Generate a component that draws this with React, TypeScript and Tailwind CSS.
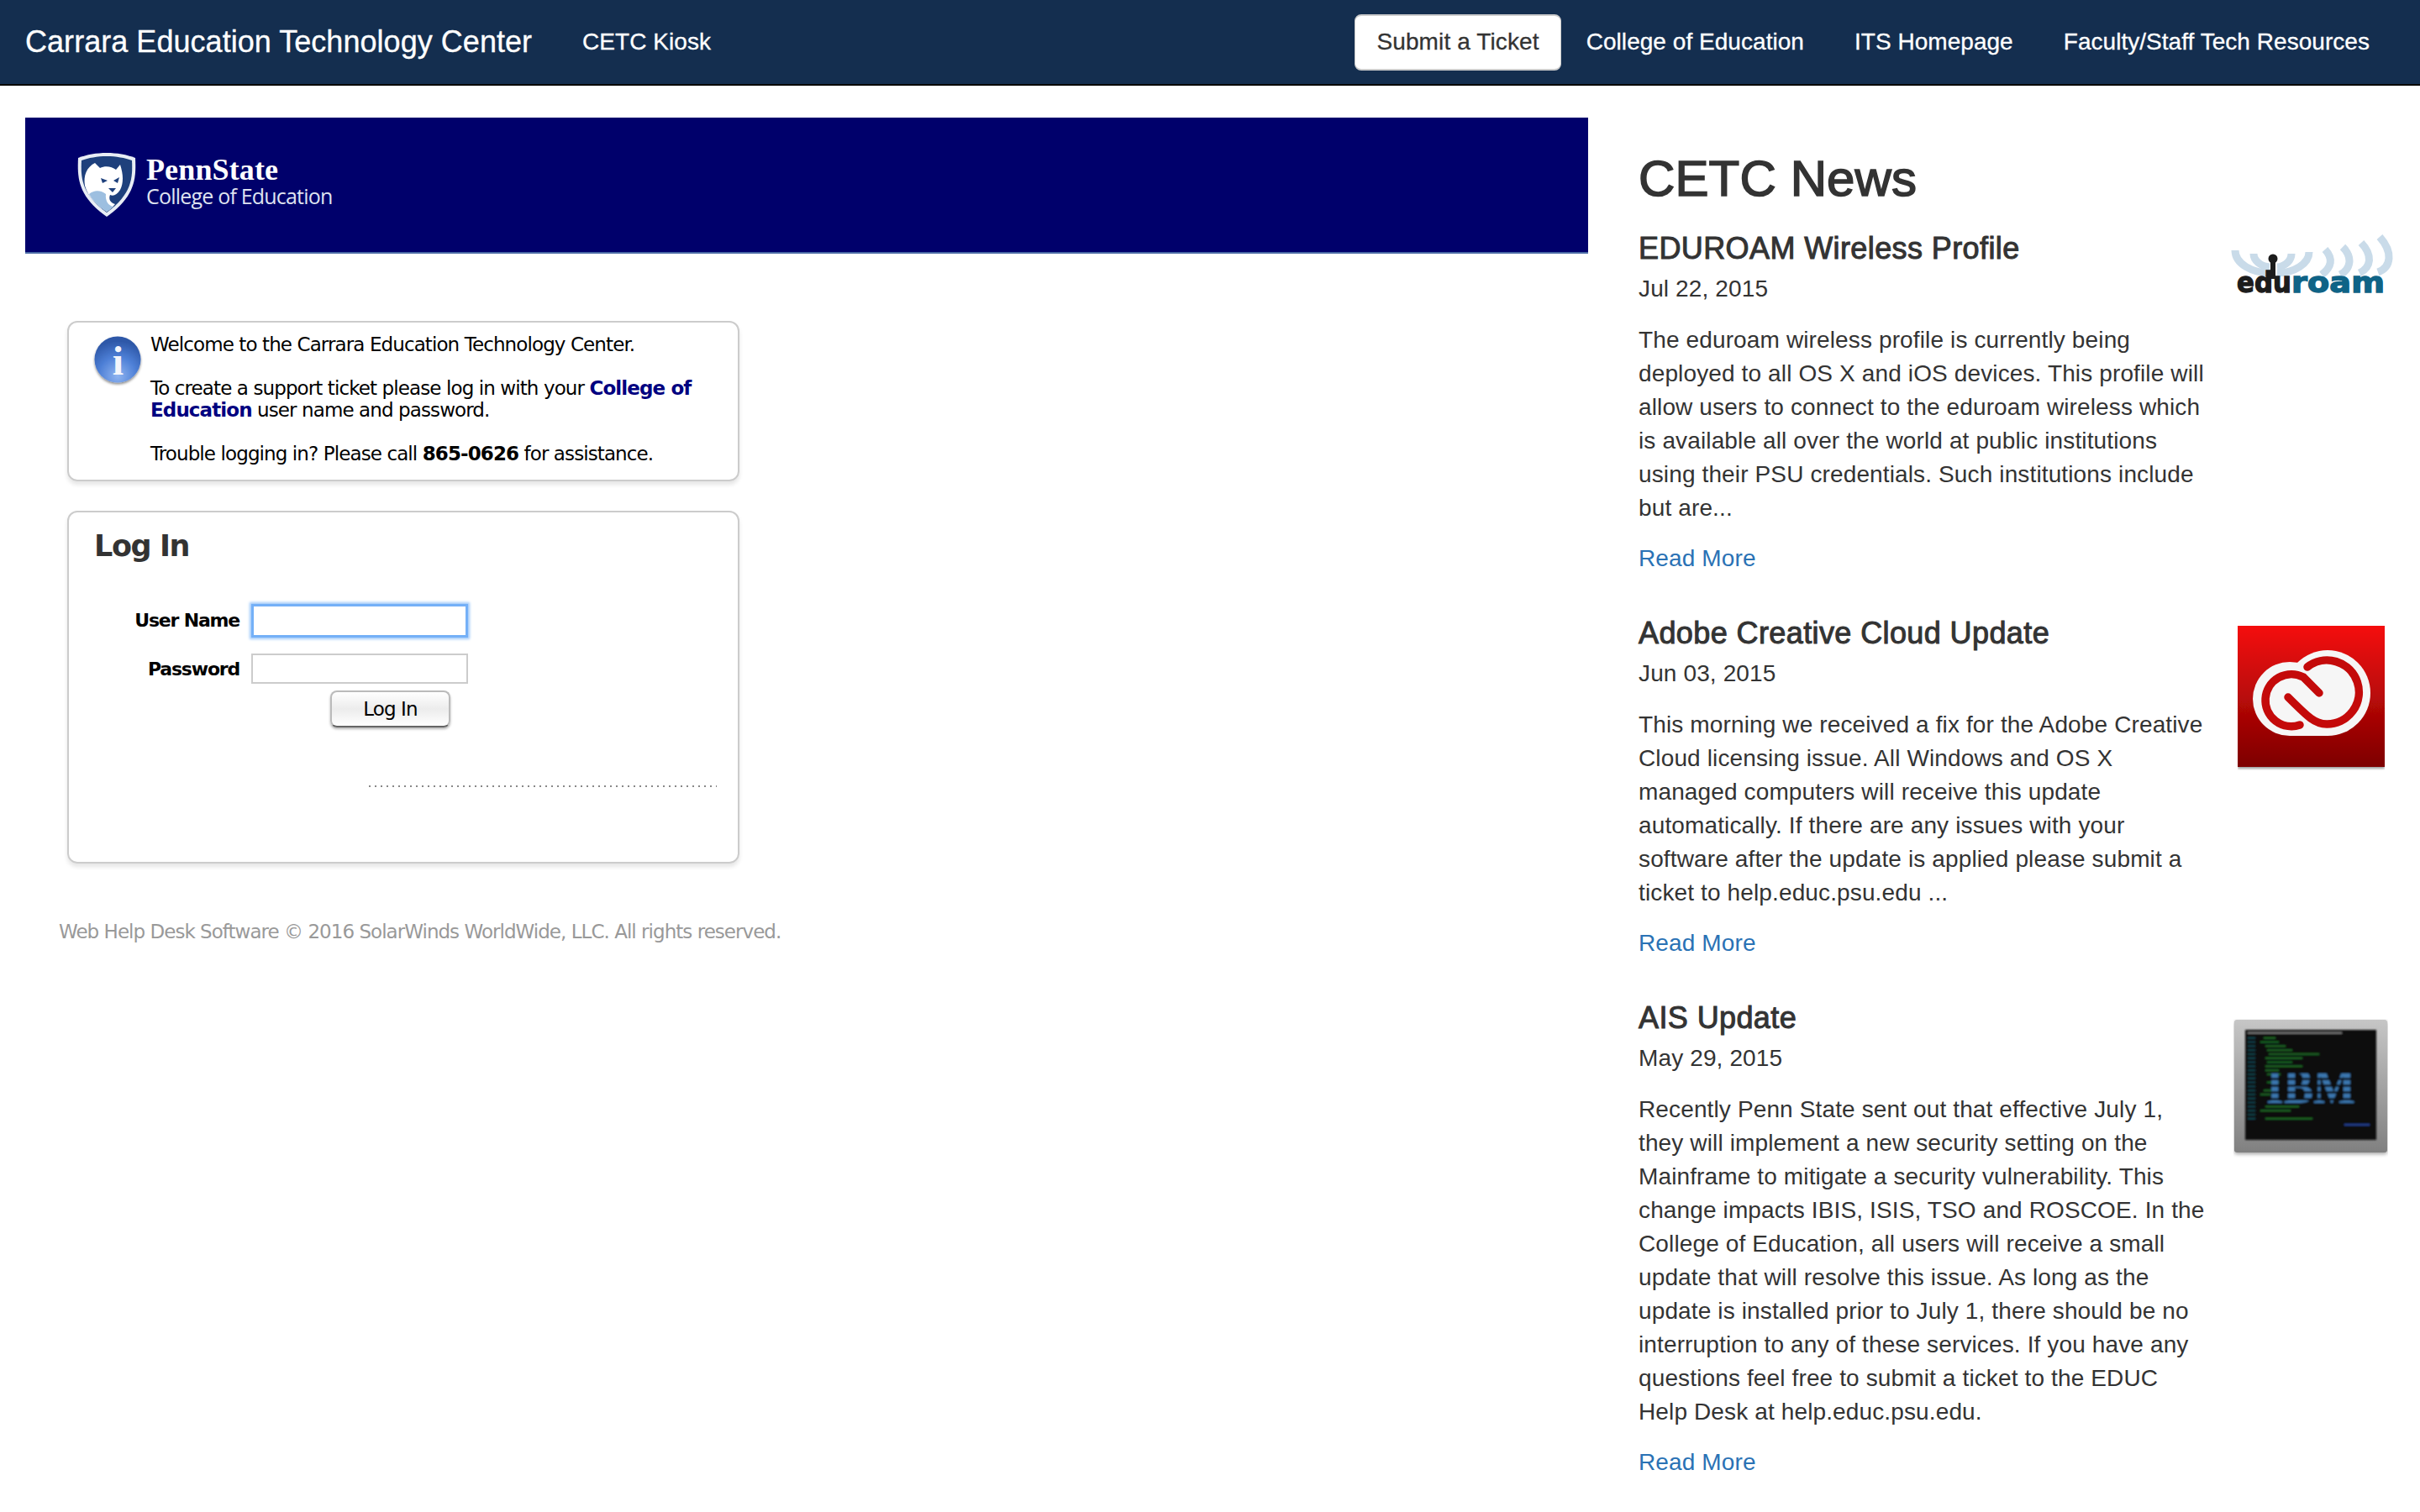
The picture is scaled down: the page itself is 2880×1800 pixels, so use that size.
const navLinks = ['College of Education', 'ITS Homepage', 'Faculty/Staff Tech Resources'];

function ShieldLogo() {
  return (
    <svg width="72" height="78" viewBox="0 0 72 78">
      <path d="M36 1 C48 1 60 3 70 7 C71 30 71 52 36 77 C1 52 1 30 2 7 C12 3 24 1 36 1 Z" fill="#e8edf5" />
      <path d="M36 5 C47 5 58 7 66 10 C67 31 66 50 36 72 C6 50 5 31 6 10 C14 7 25 5 36 5 Z" fill="#1e407c" />
      <path d="M10 40 C8 28 12 18 22 13 L28 19 C34 16 42 17 47 21 L52 15 C56 27 56 37 52 45 C48 51 44 53 40 51 C38 56 40 60 46 62 C43 66 39 69 36 71 C24 63 14 54 10 40 Z" fill="#ffffff" />
      <path d="M29 31 L37 34 L31 37 Z M51 30 L44 34 L49 37 Z M38 43 L47 43 L43 48 Z" fill="#1e407c" />
      <path d="M15 50 C22 44 30 46 35 50 C34 58 38 64 44 65 C41 68 38 70 36 71 C28 66 20 59 15 50 Z" fill="#9dbfe0" />
    </svg>
  );
}

function InfoIcon() {
  return (
    <svg width="60" height="60" viewBox="0 0 60 60" className="shrink-0">
      <defs>
        <radialGradient id="infoBlue" cx="50%" cy="85%" r="75%">
          <stop offset="0%" stopColor="#8fb4f0" />
          <stop offset="55%" stopColor="#4d7fd6" />
          <stop offset="100%" stopColor="#2e58a8" />
        </radialGradient>
        <filter id="infoShadow" x="-20%" y="-20%" width="140%" height="140%">
          <feDropShadow dx="0" dy="2" stdDeviation="1.5" floodColor="#000" floodOpacity="0.45" />
        </filter>
      </defs>
      <circle cx="30" cy="28" r="27.5" fill="url(#infoBlue)" filter="url(#infoShadow)" />
      <text x="30" y="46" textAnchor="middle" fontFamily="Liberation Serif" fontWeight="700" fontSize="48" fill="#f4f6fb">i</text>
    </svg>
  );
}

function EduroamLogo() {
  const arcs = [
    'M40 38 C40 54 60 65 82 65',
    'M62 42 C62 50 70 57 81 58',
    'M107 42 C107 50 100 57 90 58',
    'M128 40 C128 54 110 65 90 65',
    'M147 37 C157 48 155 58 143 67',
    'M168 34 C180 46 178 60 165 67',
    'M190 29 C204 44 202 58 188 65',
    'M212 22 C228 40 226 58 210 64',
  ];
  return (
    <svg width="200" height="84" viewBox="30 16 200 84">
      <g fill="none" stroke="#c9dbe9" strokeWidth="9">
        {arcs.map((d) => (
          <path key={d} d={d} />
        ))}
      </g>
      <circle cx="85" cy="48" r="5.5" fill="#1c1c1c" />
      <rect x="82" y="50" width="6" height="22" fill="#1c1c1c" />
      <text x="42" y="88" fontFamily="DejaVu Sans" fontWeight="700" fontSize="34" textLength="65" lengthAdjust="spacingAndGlyphs" fill="#1c1c1c" stroke="#1c1c1c" strokeWidth="1.4">edu</text>
      <text x="107" y="88" fontFamily="DejaVu Sans" fontWeight="700" fontSize="34" textLength="111" lengthAdjust="spacingAndGlyphs" fill="#0f6386" stroke="#0f6386" strokeWidth="1.4">roam</text>
    </svg>
  );
}

function AdobeIcon() {
  return (
    <svg width="175" height="172" viewBox="0 0 175 172">
      <defs>
        <linearGradient id="ccRed" x1="0" y1="0" x2="0" y2="1">
          <stop offset="0%" stopColor="#f5100f" />
          <stop offset="100%" stopColor="#7d0000" />
        </linearGradient>
        <filter id="ccShadow" x="-5%" y="-5%" width="110%" height="110%">
          <feDropShadow dx="0" dy="2" stdDeviation="1.5" floodColor="#000" floodOpacity="0.4" />
        </filter>
      </defs>
      <rect width="175" height="168" fill="url(#ccRed)" filter="url(#ccShadow)" />
      <g fill="#f6f6f6">
        <circle cx="107" cy="80" r="51" />
        <circle cx="62" cy="87" r="44" />
        <rect x="62" y="100" width="45" height="31" />
      </g>
      <g fill="none" stroke="#c40a0a" strokeWidth="9.5">
        <path d="M83 49 A38 38 0 1 1 106 117 C92 117 84 109 60 85" strokeLinecap="round" />
        <path d="M97 80 L78 61 A31 31 0 1 0 74 118" strokeLinecap="round" />
      </g>
    </svg>
  );
}

function IbmIcon() {
  // rows of the terminal screenshot: indent and length of each blurred line
  const rows = [
    [8, 14], [4, 22], [10, 24], [12, 30], [14, 60], [10, 44], [12, 30], [10, 44],
    [10, 16], [12, 16], [12, 24], [12, 14], [10, 14], [8, 14], [4, 12], [12, 60],
    [0, 0], [10, 40], [4, 36], [0, 0], [10, 56],
  ];
  return (
    <svg width="184" height="166" viewBox="0 0 184 166">
      <defs>
        <linearGradient id="ibmFrame" x1="0" y1="0" x2="0" y2="1">
          <stop offset="0%" stopColor="#c6c6c6" />
          <stop offset="100%" stopColor="#808080" />
        </linearGradient>
        <filter id="ibmSoft" x="-5%" y="-5%" width="110%" height="110%">
          <feGaussianBlur stdDeviation="0.8" />
        </filter>
        <filter id="ibmShadow" x="-5%" y="-5%" width="110%" height="110%">
          <feDropShadow dx="0" dy="2" stdDeviation="2" floodColor="#000" floodOpacity="0.35" />
        </filter>
      </defs>
      <rect x="1" y="1" width="182" height="158" rx="3" fill="url(#ibmFrame)" filter="url(#ibmShadow)" />
      <g filter="url(#ibmSoft)">
        <rect x="14" y="13" width="156" height="131" fill="#0b0b0b" />
        <rect x="17" y="16" width="112" height="1.5" fill="#8f8f8f" />
        {rows.map(([indent, len], i) => (
          <g key={i}>
            <rect x="17" y={22 + i * 4.8} width="9" height="1.5" fill="#14505a" />
            {len > 0 && <rect x={28 + indent} y={22 + i * 4.8} width={len} height="1.5" fill="#1f7a2a" />}
          </g>
        ))}
        <rect x="45" y="70" width="22" height="2" fill="#8a1f1f" />
        <text x="92" y="100" textAnchor="middle" fontFamily="Liberation Serif" fontWeight="700" fontSize="58" textLength="106" lengthAdjust="spacingAndGlyphs" fill="#3a76ae">IBM</text>
        {[62, 70, 78, 86, 94].map((y) => (
          <rect key={y} x="36" y={y} width="112" height="3" fill="#0b0b0b" />
        ))}
        <rect x="132" y="125" width="30" height="2" fill="#24408f" />
      </g>
    </svg>
  );
}

const news = [
  {
    title: 'EDUROAM Wireless Profile',
    date: 'Jul 22, 2015',
    body: 'The eduroam wireless profile is currently being deployed to all OS X and iOS devices. This profile will allow users to connect to the eduroam wireless which is available all over the world at public institutions using their PSU credentials. Such institutions include but are...',
    image: <EduroamLogo />,
    imageTop: 'pt-0',
  },
  {
    title: 'Adobe Creative Cloud Update',
    date: 'Jun 03, 2015',
    body: 'This morning we received a fix for the Adobe Creative Cloud licensing issue. All Windows and OS X managed computers will receive this update automatically. If there are any issues with your software after the update is applied please submit a ticket to help.educ.psu.edu ...',
    image: <AdobeIcon />,
    imageTop: 'pt-[11px]',
  },
  {
    title: 'AIS Update',
    date: 'May 29, 2015',
    body: 'Recently Penn State sent out that effective July 1, they will implement a new security setting on the Mainframe to mitigate a security vulnerability. This change impacts IBIS, ISIS, TSO and ROSCOE. In the College of Education, all users will receive a small update that will resolve this issue. As long as the update is installed prior to July 1, there should be no interruption to any of these services. If you have any questions feel free to submit a ticket to the EDUC Help Desk at help.educ.psu.edu.',
    image: <IbmIcon />,
    imageTop: 'pt-[21px]',
  },
];

export default function App() {
  return (
    <div className="min-h-[1800px] bg-white font-['Liberation_Sans',Arial,sans-serif] text-[28px] leading-[40px] tracking-[0.13px] text-[#333]">
      {/* Navbar */}
      <nav className="flex h-[102px] items-center justify-between border-b-2 border-black bg-[#142e4f] pl-[30px] pr-[60px] tracking-[0.04px] text-white [-webkit-text-stroke:0.3px]">
        <div className="flex items-center">
          <span className="text-[36px]">Carrara Education Technology Center</span>
          <a className="ml-[60px]">CETC Kiosk</a>
        </div>
        <div className="flex items-center">
          <a className="flex h-[67px] items-center rounded-lg border-x border-y-2 border-[#ccc] bg-white px-[25px] tracking-[0.13px] text-[#333]">
            Submit a Ticket
          </a>
          {navLinks.map((link) => (
            <a key={link} className="px-[30px] last:pr-0">
              {link}
            </a>
          ))}
        </div>
      </nav>

      <div className="flex pl-[30px]">
        {/* Left column */}
        <div className="w-[1860px] pt-[38px]">
          <div className="flex h-[162px] items-center gap-[11px] border-b-2 border-[#4a6aa5] bg-[#00006b] pl-[61px] text-white">
            <ShieldLogo />
            <div className="-mt-[10px]">
              <div className="font-['Liberation_Serif',serif] text-[36px] font-bold leading-[36px]">PennState</div>
              <div className="font-['Open_Sans',sans-serif] text-[25px] leading-[26px] tracking-[-0.8px] text-[#dfe3f0]">College of Education</div>
            </div>
          </div>

          <div className="w-[850px] pl-[50px] pt-[80px] font-['DejaVu_Sans',sans-serif] text-[23px] leading-[26px] tracking-[-0.9px] text-black">
            <div className="flex h-[191px] gap-[9px] rounded-xl border-2 border-[#ccc] pl-[28px] pr-[20px] pt-[13px] shadow-[0_4px_5px_rgba(0,0,0,0.1)]">
              <div className="pt-[3px]">
                <InfoIcon />
              </div>
              <div>
                <p>Welcome to the Carrara Education Technology Center.</p>
                <p className="mt-[26px]">
                  To create a support ticket please log in with your{' '}
                  <a className="font-bold text-[#000080]">College of Education</a> user name and password.
                </p>
                <p className="mt-[26px]">
                  Trouble logging in? Please call <b>865-0626</b> for assistance.
                </p>
              </div>
            </div>

            <div className="mt-[35px] h-[420px] rounded-xl border-2 border-[#ccc] pl-[30px] pr-[26px] pt-[17px] shadow-[0_4px_5px_rgba(0,0,0,0.1)]">
              <h2 className="text-[35px] font-bold leading-[46px] tracking-[-1.4px] text-[#333]">Log In</h2>
              <div className="mt-[46px] grid grid-cols-[173px_258px] items-center gap-x-[14px] gap-y-[21px]">
                <label className="text-right text-[22px] font-bold tracking-[-1.2px]">User Name</label>
                <div className="h-[40px] border-[3px] border-[#74b0f7] shadow-[0_0_3px_2px_#a0cafa]" />
                <label className="text-right text-[22px] font-bold tracking-[-1.2px]">Password</label>
                <div className="-mt-[2px] h-[36px] border-2 border-[#ccc]" />
              </div>
              <div className="ml-[281px] mt-[8px] flex h-[44px] w-[143px] items-center justify-center rounded-lg border-2 border-[#bbb] border-b-[#666] bg-gradient-to-b from-white via-[#ececec] to-white text-[23px] leading-none shadow-[0_2px_3px_rgba(0,0,0,0.3)]">
                Log In
              </div>
              <div className="ml-[327px] mt-[69px] h-[2px] w-[414px] bg-[repeating-linear-gradient(90deg,#888_0_2px,transparent_2px_7px)]" />
            </div>

            <p className="ml-[-10px] mt-[68px] whitespace-nowrap tracking-[-0.97px] text-[#999]">
              Web Help Desk Software © 2016 SolarWinds WorldWide, LLC. All rights reserved.
            </p>
          </div>
        </div>

        {/* News column */}
        <div className="ml-[60px] w-[900px]">
          <h1 className="mt-[76px] text-[60px] leading-[70px] [-webkit-text-stroke:1.6px_#333]">CETC News</h1>
          <div className="mt-[28px]">
            {news.map((item) => (
              <div key={item.title} className="mb-[49px] flex justify-between">
                <div className="w-[675px]">
                  <h3 className="text-[36px] leading-[40px] tracking-[0.4px] [-webkit-text-stroke:1px_#333]">{item.title}</h3>
                  <p className="mt-[8px]">{item.date}</p>
                  <p className="mt-[21px]">{item.body}</p>
                  <a className="mt-[20px] block text-[#2a72b5]">Read More</a>
                </div>
                <div className={`flex w-[200px] justify-center ${item.imageTop}`}>{item.image}</div>
              </div>
            ))}
          </div>
        </div>
      </div>
    </div>
  );
}
